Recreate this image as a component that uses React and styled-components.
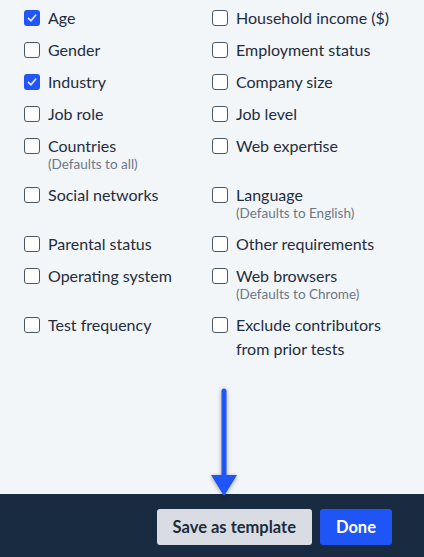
import React from "react";
import styled, { createGlobalStyle } from "styled-components";

const Global = createGlobalStyle`
  html, body { margin: 0; padding: 0; background: #f3f6f8; }
  body { font-family: "Lato", "Noto Sans", sans-serif; -webkit-font-smoothing: antialiased; }
`;

const Page = styled.div`
  position: relative;
  width: 424px;
  height: 557px;
  display: flex;
  flex-direction: column;
  background: #f3f6f8;
  overflow: hidden;
`;

const Grid = styled.div`
  flex: 1;
  display: grid;
  grid-template-columns: 188px 188px;
  row-gap: 8px;
  padding: 6px 24px 0 24px;
  align-content: start;
`;

const Option = styled.label`
  display: flex;
  align-items: flex-start;
  gap: 8px;
`;

const Box = styled.span`
  flex: none;
  box-sizing: border-box;
  width: 16px;
  height: 16px;
  margin-top: 4px;
  border-radius: 3px;
  border: ${(p) => (p.$checked ? "none" : "1.5px solid #4b5868")};
  background: ${(p) => (p.$checked ? "#2355f6" : "#ffffff")};
  display: flex;
  align-items: center;
  justify-content: center;
`;

const Text = styled.div`
  display: flex;
  flex-direction: column;
`;

const Label = styled.span`
  font-size: 16px;
  line-height: 24px;
  color: #1f2d3f;
`;

const Sub = styled.span`
  font-size: 13.5px;
  line-height: 13px;
  color: #6b7889;
  margin-bottom: 4px;
`;

const Footer = styled.div`
  height: 63px;
  flex: none;
  background: #182b41;
  display: flex;
  align-items: center;
  justify-content: flex-end;
  gap: 8px;
  padding: 0 32px;
  box-sizing: border-box;
`;

const Button = styled.button`
  height: 36px;
  border: none;
  border-radius: 3px;
  padding: 0 16px;
  font-family: "Lato", "Noto Sans", sans-serif;
  font-weight: 700;
  font-size: 16.5px;
  background: ${(p) => (p.$primary ? "#1f55f6" : "#d9dde3")};
  color: ${(p) => (p.$primary ? "#ffffff" : "#1c2b3d")};
  cursor: pointer;
  margin-top: 3px;
`;

const Arrow = styled.svg`
  position: absolute;
  left: 206px;
  top: 384px;
  filter: drop-shadow(0 1px 2px rgba(0, 0, 0, 0.35));
`;

const Check = () => (
  <svg width="12" height="12" viewBox="0 0 12 12">
    <path d="M2.5 6.3 L5 8.8 L9.6 3.2" fill="none" stroke="#dfe6ff" strokeWidth="1.8" strokeLinecap="round" strokeLinejoin="round" />
  </svg>
);

const items = [
  { l: "Age", c: true },
  { l: "Household income ($)" },
  { l: "Gender" },
  { l: "Employment status" },
  { l: "Industry", c: true },
  { l: "Company size" },
  { l: "Job role" },
  { l: "Job level" },
  { l: "Countries", s: "(Defaults to all)" },
  { l: "Web expertise" },
  { l: "Social networks" },
  { l: "Language", s: "(Defaults to English)" },
  { l: "Parental status" },
  { l: "Other requirements" },
  { l: "Operating system" },
  { l: "Web browsers", s: "(Defaults to Chrome)" },
  { l: "Test frequency" },
  { l: "Exclude contributors from prior tests" },
];

export default function App() {
  return (
    <Page>
      <Global />
      <Grid>
        {items.map((it) => (
          <Option key={it.l}>
            <Box $checked={it.c}>{it.c && <Check />}</Box>
            <Text>
              <Label>{it.l}</Label>
              {it.s && <Sub>{it.s}</Sub>}
            </Text>
          </Option>
        ))}
      </Grid>
      <Footer>
        <Button>Save as template</Button>
        <Button $primary>Done</Button>
      </Footer>
      <Arrow width="36" height="116" viewBox="0 0 36 116">
        <line x1="18" y1="7" x2="18" y2="94" stroke="#1f55f6" strokeWidth="5" strokeLinecap="round" />
        <polygon points="5,91 31,91 18,112" fill="#1f55f6" />
      </Arrow>
    </Page>
  );
}
